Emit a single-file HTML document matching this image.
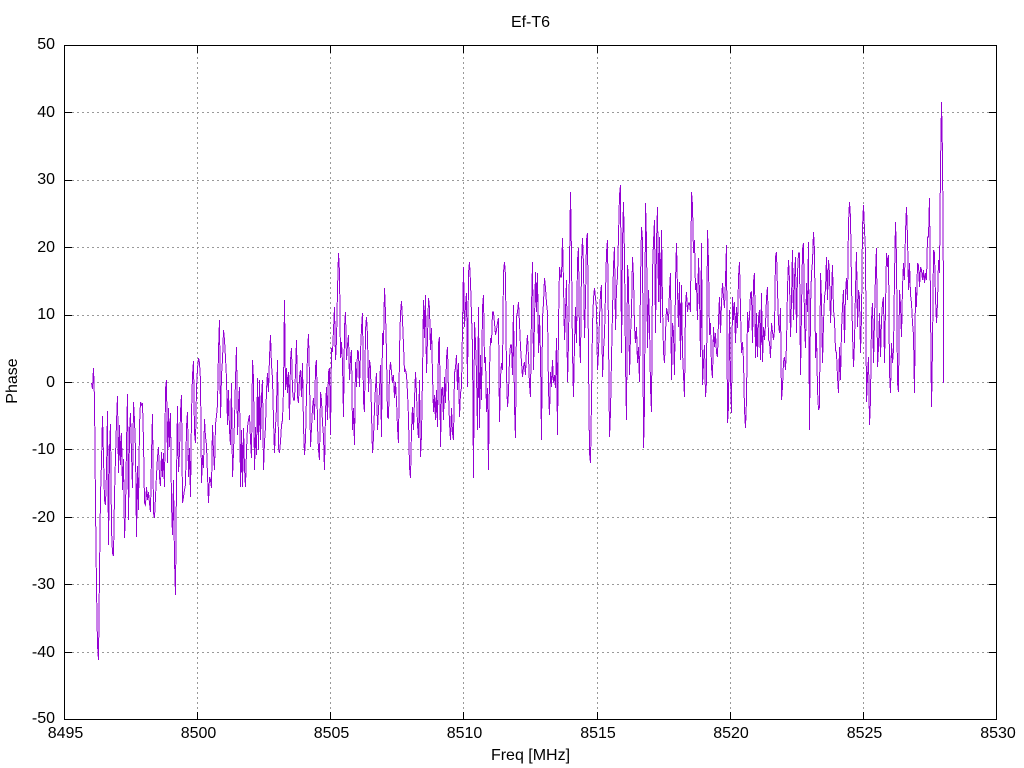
<!DOCTYPE html>
<html>
<head>
<meta charset="utf-8">
<title>Ef-T6</title>
<style>
html,body{margin:0;padding:0;background:#fff;width:1024px;height:768px;overflow:hidden}
svg{display:block}
text{font-family:"Liberation Sans",sans-serif;font-size:16px;fill:#000}
</style>
</head>
<body>
<svg width="1024" height="768" viewBox="0 0 1024 768" xmlns="http://www.w3.org/2000/svg">
<rect width="1024" height="768" fill="#fff"/>
<g stroke="#999" stroke-width="1" stroke-dasharray="2 3" fill="none" shape-rendering="crispEdges">
<path d="M72 112.5H989M72 180.5H989M72 247.5H989M72 315.5H989M72 382.5H989M72 449.5H989M72 517.5H989M72 584.5H989M72 652.5H989"/>
<path d="M197.5 52V712M330.5 52V712M463.5 52V712M597.5 52V712M730.5 52V712M863.5 52V712"/>
</g>
<g stroke="#000" stroke-width="1" fill="none" shape-rendering="crispEdges">
<path d="M64.5 45.5H996.5V719.5H64.5Z"/>
<path d="M65 112.5h7M65 180.5h7M65 247.5h7M65 315.5h7M65 382.5h7M65 449.5h7M65 517.5h7M65 584.5h7M65 652.5h7"/>
<path d="M996 112.5h-7M996 180.5h-7M996 247.5h-7M996 315.5h-7M996 382.5h-7M996 449.5h-7M996 517.5h-7M996 584.5h-7M996 652.5h-7"/>
<path d="M197.5 719v-7M330.5 719v-7M463.5 719v-7M597.5 719v-7M730.5 719v-7M863.5 719v-7"/>
<path d="M197.5 46v7M330.5 46v7M463.5 46v7M597.5 46v7M730.5 46v7M863.5 46v7"/>
</g>
<polyline fill="none" stroke="#9400d3" stroke-width="1" shape-rendering="crispEdges" points="91.5,383 92.5,389 93.5,368 94.5,399 95.5,505 96.5,588 97.5,645 98.5,660 99.5,572 100.5,495 101.5,462 102.5,416 103.5,457 104.5,500 105.5,505 106.5,472 107.5,411 108.5,545 109.5,451 110.5,424 111.5,530 112.5,553 113.5,556 114.5,495 115.5,457 116.5,422 117.5,396 118.5,473 119.5,425 120.5,465 121.5,433 122.5,490 123.5,459 124.5,538 125.5,512 126.5,445 127.5,394 128.5,520 129.5,432 130.5,413 131.5,453 132.5,488 133.5,402 134.5,420 135.5,450 136.5,537 137.5,466 138.5,510 139.5,425 140.5,402 141.5,405 142.5,403 143.5,441 144.5,503 145.5,505 146.5,487 147.5,500 148.5,492 149.5,503 150.5,512 151.5,455 152.5,414 153.5,513 154.5,518 155.5,497 156.5,475 157.5,457 158.5,447 159.5,477 160.5,486 161.5,452 162.5,477 163.5,453 164.5,487 165.5,389 166.5,380 167.5,463 168.5,408 169.5,447 170.5,413 171.5,505 172.5,535 173.5,480 174.5,560 175.5,595 176.5,478 177.5,406 178.5,472 179.5,452 180.5,412 181.5,395 182.5,503 183.5,497 184.5,490 185.5,485 186.5,427 187.5,412 188.5,477 189.5,448 190.5,497 191.5,413 192.5,375 193.5,361 194.5,433 195.5,443 196.5,388 197.5,368 198.5,358 199.5,363 200.5,380 201.5,483 202.5,455 203.5,468 204.5,419 205.5,437 206.5,445 207.5,475 208.5,503 209.5,477 210.5,480 211.5,488 212.5,425 213.5,452 214.5,470 215.5,424 216.5,416 217.5,405 218.5,350 219.5,320 220.5,418 221.5,375 222.5,360 223.5,330 224.5,340 225.5,358 226.5,378 227.5,425 228.5,390 229.5,430 230.5,445 231.5,383 232.5,477 233.5,452 234.5,420 235.5,380 236.5,347 237.5,435 238.5,403 239.5,387 240.5,487 241.5,430 242.5,487 243.5,428 244.5,468 245.5,487 246.5,450 247.5,427 248.5,420 249.5,415 250.5,440 251.5,458 252.5,360 253.5,378 254.5,470 255.5,427 256.5,455 257.5,378 258.5,450 259.5,380 260.5,440 261.5,397 262.5,380 263.5,470 264.5,442 265.5,427 266.5,390 267.5,373 268.5,392 269.5,357 270.5,335 271.5,365 272.5,378 273.5,420 274.5,453 275.5,427 276.5,408 277.5,360 278.5,448 279.5,453 280.5,442 281.5,425 282.5,420 283.5,390 284.5,300 285.5,390 286.5,368 287.5,393 288.5,372 289.5,420 290.5,360 291.5,348 292.5,390 293.5,400 294.5,400 295.5,372 296.5,340 297.5,397 298.5,403 299.5,377 300.5,370 301.5,397 302.5,363 303.5,427 304.5,455 305.5,440 306.5,395 307.5,353 308.5,334 309.5,377 310.5,447 311.5,428 312.5,408 313.5,398 314.5,420 315.5,367 316.5,360 317.5,425 318.5,450 319.5,460 320.5,392 321.5,400 322.5,423 323.5,436 324.5,470 325.5,412 326.5,387 327.5,420 328.5,372 329.5,368 330.5,435 331.5,348 332.5,352 333.5,330 334.5,307 335.5,360 336.5,340 337.5,290 338.5,253 339.5,272 340.5,358 341.5,342 342.5,362 343.5,417 344.5,327 345.5,312 346.5,360 347.5,345 348.5,335 349.5,380 350.5,358 351.5,350 352.5,430 353.5,408 354.5,445 355.5,362 356.5,387 357.5,350 358.5,352 359.5,387 360.5,352 361.5,328 362.5,313 363.5,402 364.5,412 365.5,330 366.5,317 367.5,335 368.5,392 369.5,360 370.5,367 371.5,413 372.5,453 373.5,438 374.5,408 375.5,387 376.5,373 377.5,430 378.5,410 379.5,390 380.5,365 381.5,437 382.5,333 383.5,345 384.5,288 385.5,313 386.5,353 387.5,417 388.5,418 389.5,373 390.5,362 391.5,372 392.5,383 393.5,375 394.5,398 395.5,382 396.5,400 397.5,428 398.5,443 399.5,350 400.5,313 401.5,301 402.5,320 403.5,345 404.5,372 405.5,370 406.5,375 407.5,393 408.5,417 409.5,467 410.5,478 411.5,430 412.5,407 413.5,430 414.5,400 415.5,372 416.5,393 417.5,425 418.5,438 419.5,380 420.5,457 421.5,435 422.5,377 423.5,300 424.5,338 425.5,295 426.5,373 427.5,338 428.5,298 429.5,308 430.5,350 431.5,328 432.5,375 433.5,412 434.5,395 435.5,420 436.5,390 437.5,427 438.5,343 439.5,337 440.5,447 441.5,390 442.5,387 443.5,420 444.5,377 445.5,403 446.5,358 447.5,347 448.5,393 449.5,423 450.5,440 451.5,408 452.5,433 453.5,440 454.5,373 455.5,368 456.5,355 457.5,390 458.5,363 459.5,417 460.5,393 461.5,388 462.5,327 463.5,267 464.5,327 465.5,305 466.5,293 467.5,387 468.5,273 469.5,262 470.5,282 471.5,315 472.5,347 473.5,478 474.5,322 475.5,342 476.5,373 477.5,430 478.5,307 479.5,428 480.5,355 481.5,400 482.5,307 483.5,295 484.5,363 485.5,357 486.5,412 487.5,388 488.5,470 489.5,370 490.5,338 491.5,343 492.5,312 493.5,312 494.5,323 495.5,335 496.5,330 497.5,323 498.5,318 499.5,422 500.5,377 501.5,363 502.5,370 503.5,272 504.5,262 505.5,275 506.5,375 507.5,407 508.5,393 509.5,358 510.5,345 511.5,345 512.5,375 513.5,305 514.5,407 515.5,438 516.5,317 517.5,312 518.5,302 519.5,323 520.5,347 521.5,362 522.5,377 523.5,367 524.5,362 525.5,375 526.5,348 527.5,335 528.5,357 529.5,385 530.5,397 531.5,308 532.5,262 533.5,370 534.5,320 535.5,272 536.5,312 537.5,273 538.5,353 539.5,315 540.5,355 541.5,440 542.5,317 543.5,303 544.5,278 545.5,288 546.5,303 547.5,312 548.5,390 549.5,415 550.5,372 551.5,387 552.5,360 553.5,383 554.5,375 555.5,388 556.5,338 557.5,435 558.5,323 559.5,267 560.5,277 561.5,277 562.5,238 563.5,283 564.5,340 565.5,312 566.5,280 567.5,382 568.5,342 569.5,265 570.5,192 571.5,257 572.5,352 573.5,397 574.5,343 575.5,307 576.5,343 577.5,260 578.5,248 579.5,340 580.5,363 581.5,262 582.5,238 583.5,265 584.5,338 585.5,300 586.5,240 587.5,233 588.5,360 589.5,453 590.5,463 591.5,400 592.5,325 593.5,298 594.5,288 595.5,298 596.5,308 597.5,370 598.5,352 599.5,318 600.5,293 601.5,285 602.5,377 603.5,350 604.5,335 605.5,293 606.5,252 607.5,240 608.5,333 609.5,437 610.5,412 611.5,358 612.5,312 613.5,265 614.5,247 615.5,330 616.5,288 617.5,277 618.5,235 619.5,195 620.5,185 621.5,353 622.5,243 623.5,202 624.5,257 625.5,362 626.5,420 627.5,265 628.5,280 629.5,375 630.5,335 631.5,313 632.5,257 633.5,277 634.5,327 635.5,343 636.5,327 637.5,363 638.5,347 639.5,382 640.5,280 641.5,227 642.5,240 643.5,448 644.5,407 645.5,203 646.5,240 647.5,348 648.5,290 649.5,323 650.5,388 651.5,412 652.5,272 653.5,242 654.5,220 655.5,333 656.5,242 657.5,207 658.5,302 659.5,237 660.5,323 661.5,230 662.5,305 663.5,352 664.5,363 665.5,333 666.5,308 667.5,313 668.5,322 669.5,290 670.5,273 671.5,380 672.5,323 673.5,332 674.5,375 675.5,282 676.5,243 677.5,290 678.5,327 679.5,282 680.5,360 681.5,285 682.5,352 683.5,375 684.5,397 685.5,305 686.5,292 687.5,312 688.5,303 689.5,303 690.5,312 691.5,192 692.5,205 693.5,253 694.5,240 695.5,290 696.5,283 697.5,320 698.5,258 699.5,293 700.5,357 701.5,243 702.5,385 703.5,363 704.5,345 705.5,397 706.5,382 707.5,230 708.5,263 709.5,335 710.5,323 711.5,368 712.5,378 713.5,327 714.5,347 715.5,333 716.5,353 717.5,357 718.5,320 719.5,297 720.5,333 721.5,303 722.5,283 723.5,297 724.5,308 725.5,280 726.5,245 727.5,423 728.5,407 729.5,310 730.5,377 731.5,413 732.5,297 733.5,320 734.5,302 735.5,343 736.5,307 737.5,328 738.5,277 739.5,262 740.5,310 741.5,353 742.5,342 743.5,360 744.5,410 745.5,428 746.5,400 747.5,312 748.5,332 749.5,317 750.5,293 751.5,292 752.5,343 753.5,282 754.5,273 755.5,358 756.5,313 757.5,357 758.5,318 759.5,310 760.5,360 761.5,293 762.5,362 763.5,327 764.5,340 765.5,325 766.5,298 767.5,287 768.5,340 769.5,342 770.5,358 771.5,323 772.5,332 773.5,340 774.5,330 775.5,257 776.5,252 777.5,290 778.5,323 779.5,333 780.5,308 781.5,400 782.5,387 783.5,362 784.5,357 785.5,370 786.5,345 787.5,288 788.5,260 789.5,280 790.5,337 791.5,300 792.5,250 793.5,320 794.5,280 795.5,257 796.5,333 797.5,273 798.5,253 799.5,253 800.5,375 801.5,310 802.5,250 803.5,243 804.5,322 805.5,348 806.5,283 807.5,312 808.5,242 809.5,430 810.5,307 811.5,273 812.5,262 813.5,232 814.5,250 815.5,358 816.5,333 817.5,390 818.5,410 819.5,407 820.5,273 821.5,300 822.5,363 823.5,323 824.5,297 825.5,290 826.5,257 827.5,300 828.5,260 829.5,273 830.5,323 831.5,293 832.5,265 833.5,310 834.5,320 835.5,350 836.5,353 837.5,377 838.5,393 839.5,347 840.5,380 841.5,330 842.5,307 843.5,290 844.5,343 845.5,293 846.5,278 847.5,300 848.5,222 849.5,202 850.5,217 851.5,283 852.5,333 853.5,367 854.5,343 855.5,290 856.5,252 857.5,327 858.5,290 859.5,297 860.5,353 861.5,317 862.5,227 863.5,205 864.5,230 865.5,252 866.5,402 867.5,377 868.5,357 869.5,425 870.5,400 871.5,320 872.5,303 873.5,363 874.5,320 875.5,273 876.5,248 877.5,367 878.5,347 879.5,313 880.5,357 881.5,320 882.5,303 883.5,297 884.5,363 885.5,307 886.5,253 887.5,267 888.5,255 889.5,373 890.5,393 891.5,343 892.5,363 893.5,350 894.5,277 895.5,222 896.5,257 897.5,383 898.5,392 899.5,290 900.5,305 901.5,337 902.5,287 903.5,263 904.5,280 905.5,232 906.5,207 907.5,237 908.5,290 909.5,263 910.5,295 911.5,303 912.5,323 913.5,335 914.5,393 915.5,287 916.5,307 917.5,263 918.5,265 919.5,287 920.5,267 921.5,270 922.5,280 923.5,270 924.5,283 925.5,273 926.5,280 927.5,237 928.5,237 929.5,198 930.5,307 931.5,407 932.5,347 933.5,250 934.5,253 935.5,298 936.5,323 937.5,303 938.5,260 939.5,273 940.5,167 941.5,102 942.5,155 943.5,295 943.5,383"/>
<g text-anchor="end">
<text x="55" y="49">50</text>
<text x="55" y="117">40</text>
<text x="55" y="184">30</text>
<text x="55" y="252">20</text>
<text x="55" y="319">10</text>
<text x="55" y="387">0</text>
<text x="55" y="454">-10</text>
<text x="55" y="522">-20</text>
<text x="55" y="589">-30</text>
<text x="55" y="657">-40</text>
<text x="55" y="723">-50</text>
</g>
<g text-anchor="middle">
<text x="65.5" y="738">8495</text>
<text x="198.5" y="738">8500</text>
<text x="331.5" y="738">8505</text>
<text x="464.5" y="738">8510</text>
<text x="598" y="738">8515</text>
<text x="731" y="738">8520</text>
<text x="864.5" y="738">8525</text>
<text x="998" y="738">8530</text>
<text x="530.5" y="27">Ef-T6</text>
<text x="530.5" y="760">Freq [MHz]</text>
<text transform="translate(17 381) rotate(-90)">Phase</text>
</g>
</svg>
</body>
</html>
